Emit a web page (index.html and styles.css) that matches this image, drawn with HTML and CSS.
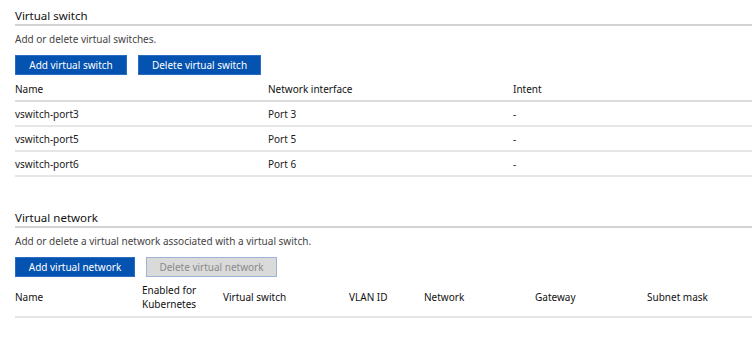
FILE: index.html
```html
<!DOCTYPE html>
<html lang="en">
<head>
    <meta charset="UTF-8">
    <title>Virtual switch settings</title>
    <link rel="stylesheet" href="styles.css">
</head>
<body>
    <!-- Virtual switch -->
    <section class="block">
        <h2 class="block-title">Virtual switch</h2>
        <p class="block-desc">Add or delete virtual switches.</p>
        <div class="actions">
            <button class="btn">Add virtual switch</button>
            <button class="btn btn-wide">Delete virtual switch</button>
        </div>
        <div class="grid grid-switch">
            <div class="row head">
                <span>Name</span><span>Network interface</span><span>Intent</span>
            </div>
            <div class="row">
                <span>vswitch-port3</span><span>Port 3</span><span>-</span>
            </div>
            <div class="row">
                <span>vswitch-port5</span><span>Port 5</span><span>-</span>
            </div>
            <div class="row">
                <span>vswitch-port6</span><span>Port 6</span><span>-</span>
            </div>
        </div>
    </section>

    <!-- Virtual network -->
    <section class="block block-net">
        <h2 class="block-title">Virtual network</h2>
        <p class="block-desc">Add or delete a virtual network associated with a virtual switch.</p>
        <div class="actions">
            <button class="btn btn-net">Add virtual network</button>
            <button class="btn btn-off" disabled>Delete virtual network</button>
        </div>
        <div class="grid grid-net">
            <div class="row head tall">
                <span>Name</span>
                <span>Enabled for<br>Kubernetes</span>
                <span>Virtual switch</span>
                <span>VLAN ID</span>
                <span>Network</span>
                <span>Gateway</span>
                <span>Subnet mask</span>
            </div>
        </div>
    </section>
</body>
</html>
```

FILE: styles.css
```css
body {
    margin: 0;
    font-family: "Noto Sans", "Open Sans", sans-serif;
    font-size: 10px;
    color: #1a1a1a;
    background: #fff;
}

.block {
    padding: 7px 0 0 15px;
}

.block-net {
    padding-top: 32px;
}

.block-title {
    margin: 0;
    font-size: 11.5px;
    font-weight: 400;
    line-height: 17px;
    color: #111;
    border-bottom: 2px solid #d2d2d2;
}

.block-desc {
    margin: 0;
    padding: 6px 0 8px;
    line-height: 15px;
    color: #444;
}

.actions {
    display: flex;
    gap: 11px;
}

.btn {
    height: 20px;
    width: 112px;
    padding: 0;
    font-family: inherit;
    font-size: 10px;
    color: #fff;
    background: #0553b0;
    border: 1px solid #2a6cc0;
    cursor: pointer;
}

.btn-wide {
    width: 123px;
}

.btn-net {
    width: 120px;
}

.btn-off {
    width: 131px;
    color: #8a8a8a;
    background: #dadada;
    border-color: #9cb5d6;
    cursor: default;
}

.row {
    display: grid;
    align-items: center;
    height: 23px;
    border-bottom: 2px solid #e6e6e6;
}

.grid-switch .row {
    grid-template-columns: 253px 245px 1fr;
}

.grid-switch .row.head {
    height: 22px;
    padding-top: 3px;
    border-bottom-color: #dcdcdc;
}

.grid-net .row {
    grid-template-columns: 127px 81px 126px 75px 111px 112px 1fr;
}

.row.tall {
    height: 38px;
    padding-top: 1px;
}

.head span {
    color: #111;
}
```
